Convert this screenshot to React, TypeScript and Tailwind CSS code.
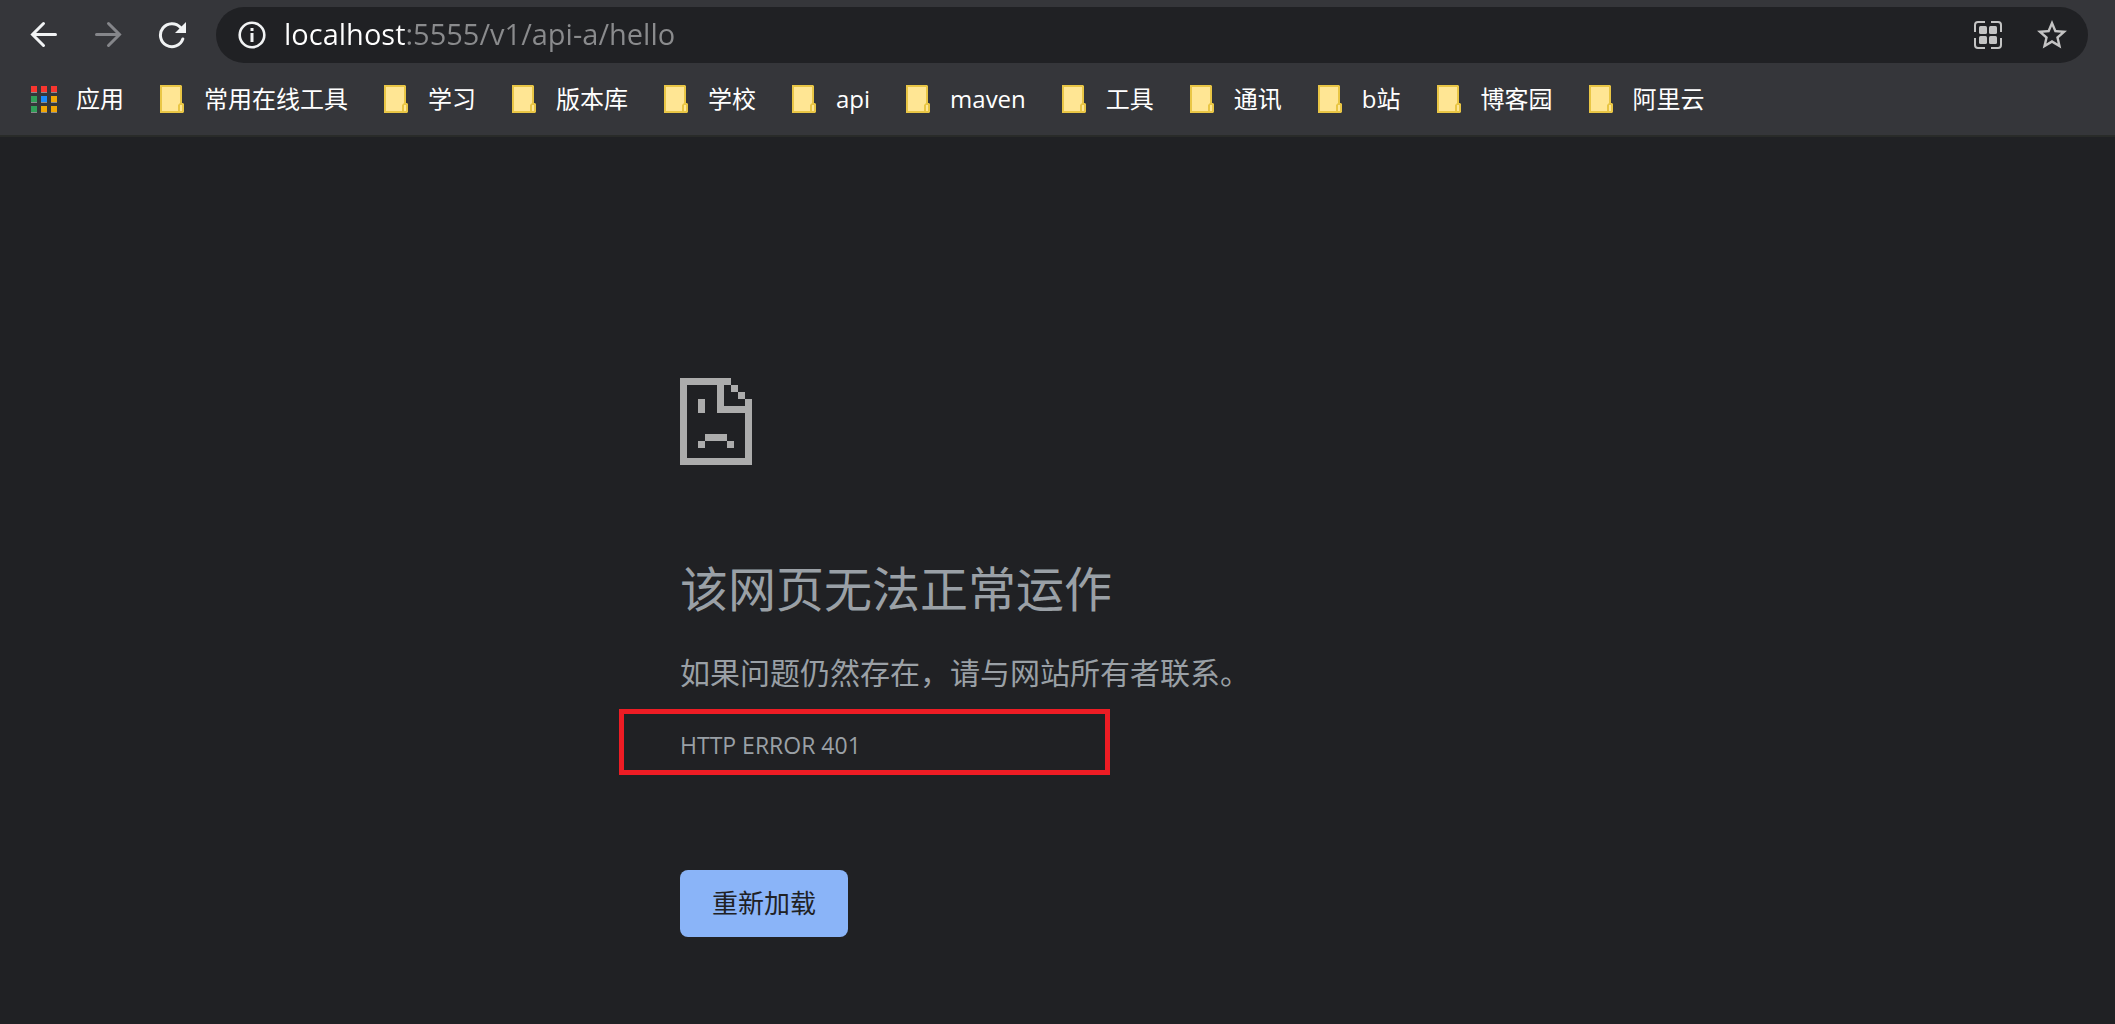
import React from 'react';

interface Bookmark {
  title: string;
}

const bookmarks: Bookmark[] = [
  { title: '常用在线工具' },
  { title: '学习' },
  { title: '版本库' },
  { title: '学校' },
  { title: 'api' },
  { title: 'maven' },
  { title: '工具' },
  { title: '通讯' },
  { title: 'b站' },
  { title: '博客园' },
  { title: '阿里云' },
];

const AppsIcon: React.FC = () => (
  <svg width="26" height="27" viewBox="0 0 26 27" shapeRendering="crispEdges" aria-hidden="true">
    <path fill="#8b8b8d" d="M0 6h6v1H0zM10 6h6v1h-6zM20 6h6v1h-6zM0 16h6v1H0zM10 16h6v1h-6zM20 16h6v1h-6zM0 26h6v1H0zM10 26h6v1h-6zM20 26h6v1h-6z" />
    <path fill="#f8362f" d="M0 0h6v6H0zM10 0h6v6h-6zM20 0h6v6h-6z" />
    <path fill="#319f59" d="M0 10h6v6H0zM0 20h6v6H0z" />
    <path fill="#1b8bfb" d="M10 10h6v6h-6z" />
    <path fill="#f2a605" d="M20 10h6v6h-6zM10 20h6v6h-6zM20 20h6v6h-6z" />
  </svg>
);

const FolderIcon: React.FC = () => (
  <svg width="24" height="28" viewBox="0 0 24 28" aria-hidden="true">
    <path fill="#e9c645" d="M0 0h21l1 1v17h1l1 1v8l-1 1H0z" />
    <path fill="#ffe694" d="M2 2h18v16l-2 2v6H2zM20 20h2v6h-2z" />
  </svg>
);

const SadPageIcon: React.FC = () => (
  <svg width="72" height="87" viewBox="0 0 72 87" shapeRendering="crispEdges" aria-hidden="true">
    <path fill="#acacac" d="M0 0h51v7h-7v21h21v-7h7v66H0zM7 7v73h58V35H37V7z" fillRule="evenodd" />
    <path fill="#acacac" d="M51 7h7v7h-7zM58 14h7v7h-7z" />
    <path fill="#acacac" d="M18 21h7v14h-7zM25 56h22v7H25zM18 63h7v7h-7zM47 63h7v7h-7z" />
  </svg>
);

const Toolbar: React.FC = () => (
  <div className="flex items-center pt-[7px] pr-[27px] pl-[30px]">
    <div className="flex shrink-0 items-center gap-9">
      <button aria-label="后退" className="text-[#f1f3f4]">
        <svg width="28" height="28" viewBox="0 0 28 28" fill="none" stroke="currentColor" strokeWidth="3" strokeLinecap="round">
          <path d="M25.500 13.500H3M13.500 2.500l-11 11 11 11" />
        </svg>
      </button>
      <button aria-label="前进" className="text-[#85868a]">
        <svg width="28" height="28" viewBox="0 0 28 28" fill="none" stroke="currentColor" strokeWidth="3" strokeLinecap="round">
          <path d="M2.500 13.500H25M14.500 2.500l11 11-11 11" />
        </svg>
      </button>
      <button aria-label="重新加载此页" className="text-[#f1f3f4]">
        <svg width="28" height="28" viewBox="0 0 28 28">
          <path
            fill="none"
            stroke="currentColor"
            strokeWidth="3"
            strokeLinecap="round"
            d="M22.500 6.500A11.500 11.500 0 1 0 24.800 18"
          />
          <path fill="currentColor" d="M28 1v11H17z" />
        </svg>
      </button>
    </div>
    <div className="ml-[30px] flex h-14 min-w-0 grow items-center rounded-full bg-[#202124] pr-[21px] pl-[22px]">
      <button aria-label="查看网站信息" className="shrink-0 text-[#f1f3f4]">
        <svg width="28" height="28" viewBox="0 0 28 28">
          <circle cx="14" cy="14" r="12.300" fill="none" stroke="currentColor" strokeWidth="2.600" />
          <path fill="currentColor" d="M12.500 7h3v3h-3zM12.500 12h3v9h-3z" />
        </svg>
      </button>
      {/* host part is white, the rest of the address is dimmed */}
      <input
        type="text"
        aria-label="地址和搜索栏"
        defaultValue="localhost:5555/v1/api-a/hello"
        spellCheck={false}
        className="ml-[18px] h-12 min-w-0 grow bg-[linear-gradient(to_right,#ffffff_121px,#8a8b8d_121px)] bg-clip-text pb-1 text-[29px] text-transparent caret-white outline-none"
      />
      <div className="flex shrink-0 items-center gap-[34px] text-[#c4c4c4]">
        <button aria-label="二维码">
          <svg width="30" height="30" viewBox="0 0 30 30">
            <path
              fill="none"
              stroke="currentColor"
              strokeWidth="2"
              d="M12 2H5a3 3 0 0 0-3 3v7M18 2h7a3 3 0 0 1 3 3v7M12 28H5a3 3 0 0 1-3-3v-7M18 28h7a3 3 0 0 0 3-3v-7"
            />
            <g fill="currentColor">
              <rect x="6" y="6" width="8" height="8" rx="1.500" />
              <rect x="16" y="6" width="8" height="8" rx="1.500" />
              <rect x="6" y="16" width="8" height="8" rx="1.500" />
              <rect x="16" y="16" width="8" height="8" rx="1.500" />
            </g>
          </svg>
        </button>
        <button aria-label="为此网页添加书签">
          <svg width="30" height="30" viewBox="2 2 20 20" fill="currentColor">
            <path d="M22 9.240l-7.190-.620L12 2 9.190 8.630 2 9.240l5.460 4.730L5.820 21 12 17.270 18.180 21l-1.630-7.030L22 9.240zM12 15.400l-3.760 2.270 1-4.280-3.320-2.880 4.380-.380L12 6.100l1.710 4.040 4.380.380-3.320 2.880 1 4.280L12 15.400z" />
          </svg>
        </button>
      </div>
    </div>
  </div>
);

const BookmarksBar: React.FC = () => (
  <nav className="flex h-[72px] items-center gap-9 overflow-hidden pl-[31px] text-2xl whitespace-nowrap text-white">
    <a href="#apps" className="flex items-center gap-[19px]">
      <AppsIcon />
      <span>应用</span>
    </a>
    {bookmarks.map((bookmark) => (
      <a key={bookmark.title} href={`#${bookmark.title}`} className="flex items-center gap-5">
        <FolderIcon />
        <span>{bookmark.title}</span>
      </a>
    ))}
  </nav>
);

const ErrorPage: React.FC = () => (
  <main className="mx-auto w-full max-w-[755px] pt-[241px] text-[#9aa0a6]">
    <SadPageIcon />
    <h1 className="mt-24 text-5xl leading-14">该网页无法正常运作</h1>
    <p className="mt-6 text-[30px] leading-16">如果问题仍然存在，请与网站所有者联系。</p>
    <div className="relative mt-6 text-[23px] leading-8">
      HTTP ERROR 401
      <div className="pointer-events-none absolute -top-5 -left-[61px] h-[66px] w-[491px] border-5 border-[#ed1c24]" />
    </div>
    <button className="mt-[109px] h-[67px] rounded-lg bg-[#8ab4f8] px-8 text-[26px] text-[#202124]">
      重新加载
    </button>
  </main>
);

export default function App() {
  return (
    <div className="flex min-h-screen flex-col bg-[#202124] font-['Open_Sans','Noto_Sans_CJK_SC',sans-serif]">
      <header className="border-b-2 border-[#292b29] bg-[#35363a]">
        <Toolbar />
        <BookmarksBar />
      </header>
      <ErrorPage />
    </div>
  );
}
